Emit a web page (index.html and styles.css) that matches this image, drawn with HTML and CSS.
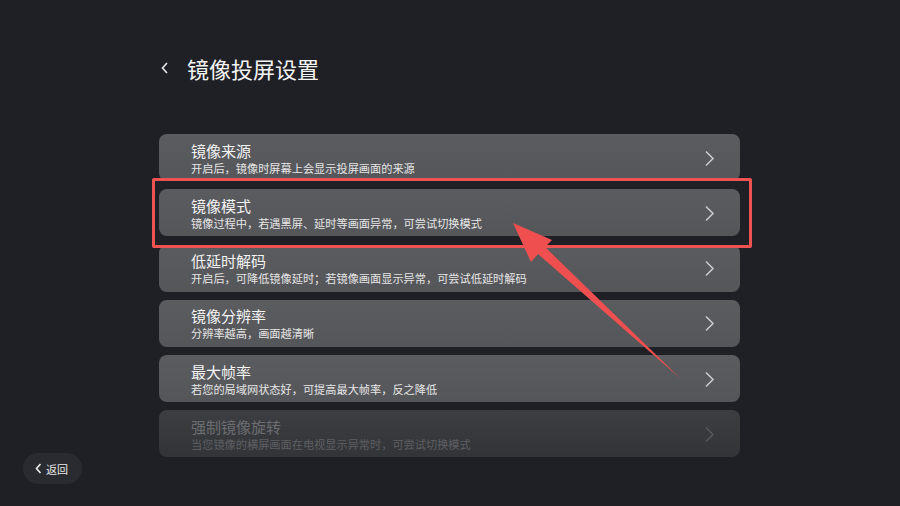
FILE: index.html
```html
<!DOCTYPE html>
<html lang="zh">
<head>
<meta charset="utf-8">
<link rel="stylesheet" href="styles.css">
</head>
<body>
<div class="screen">
  <header class="header">
    <svg class="back-icon" width="8" height="12" viewBox="0 0 8 12"><path d="M6 1 L1.5 6 L6 11" fill="none" stroke="#e8e8e8" stroke-width="1.6"/></svg>
    <h1 class="title">镜像投屏设置</h1>
  </header>
  <ul class="list">
    <li class="card"><div class="text"><div class="t">镜像来源</div><div class="s">开启后，镜像时屏幕上会显示投屏画面的来源</div></div><svg class="chev" width="11" height="17" viewBox="0 0 11 17"><path d="M2 1.5 L9 8.5 L2 15.5" fill="none" stroke="currentColor" stroke-width="1.6"/></svg></li>
    <li class="card"><div class="text"><div class="t">镜像模式</div><div class="s">镜像过程中，若遇黑屏、延时等画面异常，可尝试切换模式</div></div><svg class="chev" width="11" height="17" viewBox="0 0 11 17"><path d="M2 1.5 L9 8.5 L2 15.5" fill="none" stroke="currentColor" stroke-width="1.6"/></svg></li>
    <li class="card"><div class="text"><div class="t">低延时解码</div><div class="s">开启后，可降低镜像延时；若镜像画面显示异常，可尝试低延时解码</div></div><svg class="chev" width="11" height="17" viewBox="0 0 11 17"><path d="M2 1.5 L9 8.5 L2 15.5" fill="none" stroke="currentColor" stroke-width="1.6"/></svg></li>
    <li class="card"><div class="text"><div class="t">镜像分辨率</div><div class="s">分辨率越高，画面越清晰</div></div><svg class="chev" width="11" height="17" viewBox="0 0 11 17"><path d="M2 1.5 L9 8.5 L2 15.5" fill="none" stroke="currentColor" stroke-width="1.6"/></svg></li>
    <li class="card"><div class="text"><div class="t">最大帧率</div><div class="s">若您的局域网状态好，可提高最大帧率，反之降低</div></div><svg class="chev" width="11" height="17" viewBox="0 0 11 17"><path d="M2 1.5 L9 8.5 L2 15.5" fill="none" stroke="currentColor" stroke-width="1.6"/></svg></li>
    <li class="card card-faded"><div class="text"><div class="t">强制镜像旋转</div><div class="s">当您镜像的横屏画面在电视显示异常时，可尝试切换模式</div></div><svg class="chev" width="11" height="17" viewBox="0 0 11 17"><path d="M2 1.5 L9 8.5 L2 15.5" fill="none" stroke="currentColor" stroke-width="1.6"/></svg></li>
  </ul>
  <div class="back-btn"><svg width="7" height="11" viewBox="0 0 7 11"><path d="M5.5 1 L1.5 5.5 L5.5 10" fill="none" stroke="#eee" stroke-width="1.6"/></svg><span>返回</span></div>
  <div class="highlight"></div>
  <svg class="arrow" width="900" height="506" viewBox="0 0 900 506"><polygon points="513,223 552,240 545,247 681,379 538,254 531,262" fill="#f04f4f"/></svg>
</div>
</body>
</html>
```
FILE: styles.css
```css
* { box-sizing: border-box; }
html, body { margin: 0; padding: 0; }
body {
  background: #1f2025;
  font-family: "Noto Sans CJK SC", "Noto Sans", sans-serif;
  color: #f2f2f2;
}
.screen {
  position: relative;
  width: 900px;
  height: 506px;
  overflow: hidden;
  background: #1f2025;
}
.header {
  display: flex;
  align-items: center;
  padding: 53px 0 0 161px;
  height: 83px;
}
.back-icon { margin-right: 18px; }
.title {
  margin: 0;
  font-size: 22px;
  font-weight: 400;
  line-height: 30px;
  color: #f4f4f4;
}
.list {
  list-style: none;
  margin: 51px 0 0 159px;
  padding: 0;
  width: 581px;
  display: flex;
  flex-direction: column;
  gap: 8.3px;
}
.card {
  height: 47px;
  border-radius: 8px;
  background: linear-gradient(#5b5c60, #55565a);
  display: flex;
  align-items: center;
  justify-content: space-between;
  padding: 1px 25px 0 32px;
  color: #c9c9cb;
}
.text { display: flex; flex-direction: column; }
.t {
  font-size: 15px;
  line-height: 19px;
  color: #f4f4f4;
}
.s {
  font-size: 11.2px;
  line-height: 15px;
  margin-top: 1px;
  color: #e6e6e6;
}
.card-faded {
  background: linear-gradient(#3d3e42, #333438);
  color: #56575b;
}
.card-faded .t { color: #6c6d71; }
.card-faded .s { color: #5e5f63; }
.back-btn {
  position: absolute;
  left: 23px;
  top: 453px;
  width: 59px;
  height: 31px;
  border-radius: 16px;
  background: #2a2b30;
  display: flex;
  align-items: center;
  padding-left: 12px;
  gap: 4px;
  font-size: 11px;
  color: #e8e8e8;
}
.highlight {
  position: absolute;
  left: 152px;
  top: 178px;
  width: 600px;
  height: 70px;
  border: 3.5px solid #f05252;
  border-radius: 2px;
}
.arrow { position: absolute; left: 0; top: 0; }
```
